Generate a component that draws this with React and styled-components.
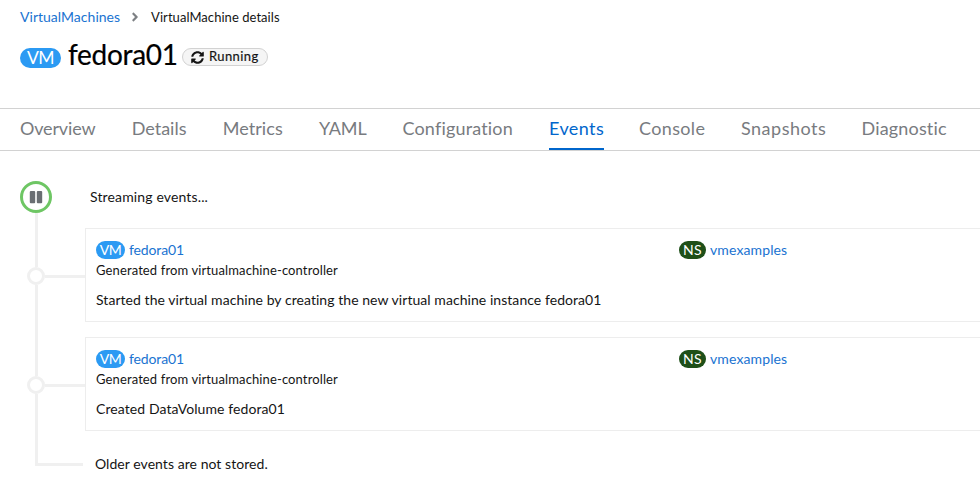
import React from "react";
import styled, { createGlobalStyle } from "styled-components";
import { FaSyncAlt, FaAngleRight } from "react-icons/fa";

const GlobalStyle = createGlobalStyle`
  *, *::before, *::after { box-sizing: border-box; }
  body {
    margin: 0;
    background: #fff;
    color: #151515;
    font-family: Lato, "Open Sans", sans-serif;
    font-size: 14px;
    line-height: 20px;
    overflow: hidden;
  }
`;

const Page = styled.main`
  height: 498px;
  overflow: hidden;
`;

const Text = styled.span`
  white-space: nowrap;
  letter-spacing: ${(p) => p.$track || 0}px;
`;

const Link = styled.a`
  color: #1a73d1;
  text-decoration: none;
  white-space: nowrap;
  letter-spacing: ${(p) => p.$track || 0}px;
`;

const Header = styled.header`
  height: 108px;
  padding: 7px 20px 0;
`;

const Breadcrumb = styled.nav`
  display: flex;
  align-items: center;
  height: 20px;
`;

const Divider = styled(FaAngleRight)`
  width: 10px;
  height: 14px;
  margin: 0 11px 0 10px;
  color: #7d8084;
`;

const Current = styled(Text)`
  font-size: 13px;
`;

const TitleRow = styled.div`
  display: flex;
  align-items: center;
  height: 40px;
  margin-top: 10px;
`;

const Title = styled.h1`
  margin: -6px 6px 0 7px;
  width: 108px;
  font-size: 28px;
  font-weight: 400;
  line-height: 36px;
  letter-spacing: -0.3px;
  color: #000;
  -webkit-text-stroke: 0.2px #000;
  white-space: nowrap;
`;

const Badge = styled.span`
  display: inline-flex;
  align-items: center;
  justify-content: center;
  flex: none;
  width: ${(p) => p.$width}px;
  height: ${(p) => (p.$large ? 20 : 18)}px;
  margin-top: ${(p) => (p.$large ? 2 : 0)}px;
  border-radius: 20px;
  background: ${(p) => p.$color};
  color: #fff;
  font-size: ${(p) => (p.$large ? 17.5 : 14)}px;
  font-weight: 400;
  letter-spacing: ${(p) => p.$track || 0}px;
  line-height: 18px;
`;

const Status = styled.span`
  display: flex;
  align-items: center;
  gap: 5px;
  width: 86px;
  height: 18px;
  padding-left: 8px;
  border: 1px solid #d2d2d2;
  border-radius: 9px;
  background: #f5f5f5;
  font-size: 13px;
  line-height: 16px;
  letter-spacing: 0.4px;
  -webkit-text-stroke: 0.2px #151515;
`;

const StatusText = styled.span`
  padding-bottom: 2px;
`;

const Tabs = styled.nav`
  display: flex;
  gap: 35px;
  height: 43px;
  padding-left: 20px;
  border-top: 1px solid #d2d2d2;
  border-bottom: 1px solid #d2d2d2;
`;

const Tab = styled.a`
  flex: none;
  width: ${(p) => p.$width}px;
  height: 41px;
  border-bottom: 2px solid ${(p) => (p.$active ? "#06c" : "transparent")};
  color: ${(p) => (p.$active ? "#06c" : "#787b80")};
  font-size: 18px;
  line-height: 38px;
  letter-spacing: ${(p) => p.$track}px;
  white-space: nowrap;
`;

const Stream = styled.section`
  padding: 30px 0 0 20px;
`;

const StreamRow = styled.div`
  display: flex;
  height: ${(p) => p.$height}px;
`;

const Rail = styled.div`
  display: flex;
  flex: none;
  flex-direction: column;
  width: 65px;
  padding-left: ${(p) => p.$inset || 0}px;
`;

const Line = styled.div`
  flex: ${(p) => (p.$height ? "none" : 1)};
  width: 3px;
  height: ${(p) => p.$height || 0}px;
  margin-left: ${(p) => p.$indent}px;
  background: #f0f0f0;
`;

const PauseButton = styled.button`
  display: flex;
  flex: none;
  align-items: center;
  justify-content: center;
  width: 32px;
  height: 32px;
  padding: 0;
  border: 3px solid #6ec664;
  border-radius: 50%;
  background: #fff;
  color: #6a6e73;
`;

const StreamLabel = styled.div`
  padding: 6px 0 0 5px;
`;

const NodeRow = styled.div`
  display: flex;
  align-items: center;
  height: 18px;
`;

const Node = styled.span`
  width: 18px;
  height: 18px;
  border: 3px solid #f0f0f0;
  border-radius: 50%;
`;

const Connector = styled.span`
  flex: 1;
  height: 3px;
  margin-top: 1px;
  background: #f0f0f0;
`;

const Card = styled.article`
  flex: 1;
  height: 94px;
  padding: 11px 10px 0;
  border: 1px solid #ededed;
  border-right: 0;
`;

const CardHead = styled.div`
  display: grid;
  grid-template-columns: 583px 1fr;
  height: 20px;
`;

const Resource = styled.div`
  display: flex;
  align-items: center;
  gap: 4px;
`;

const Source = styled.div`
  height: 20px;
  font-size: 13px;
  letter-spacing: 0.12px;
`;

const Message = styled.p`
  margin: 10px 0 0;
  letter-spacing: ${(p) => p.$track}px;
`;

const Footer = styled.div`
  display: flex;
`;

const Corner = styled.div`
  width: 48px;
  height: 35px;
  margin-left: 15px;
  border-left: 3px solid #f0f0f0;
  border-bottom: 3px solid #f0f0f0;
`;

const FooterText = styled(Text)`
  padding: 23px 0 0 12px;
`;

const tabs = [
  ["Overview", 76.7, -0.15],
  ["Details", 56, 0],
  ["Metrics", 61.3, 0.07],
  ["YAML", 48.5, -0.15],
  ["Configuration", 111.5, 0.17],
  ["Events", 55, 0.42],
  ["Console", 67, 0.35],
  ["Snapshots", 85.5, 0.5],
  ["Diagnostic", 85, 0.17],
];

const events = [
  ["Started the virtual machine by creating the new virtual machine instance fedora01", 0.055],
  ["Created DataVolume fedora01", 0.09],
];

function Event({ message, track, height }) {
  return (
    <StreamRow $height={height}>
      <Rail $inset={7}>
        <Line $height={39} $indent={8} />
        <NodeRow>
          <Node />
          <Connector />
        </NodeRow>
        <Line $indent={8} />
      </Rail>
      <Card>
        <CardHead>
          <Resource>
            <Badge $width={29} $color="#2b9af3" $track={-0.5}>VM</Badge>
            <Link $track={-0.13}>fedora01</Link>
          </Resource>
          <Resource>
            <Badge $width={27} $color="#1e4f18" $track={0.3}>NS</Badge>
            <Link $track={0.12}>vmexamples</Link>
          </Resource>
        </CardHead>
        <Source>Generated from virtualmachine-controller</Source>
        <Message $track={track}>{message}</Message>
      </Card>
    </StreamRow>
  );
}

export default function App() {
  return (
    <Page>
      <GlobalStyle />
      <Header>
        <Breadcrumb>
          <Link $track={0.02}>VirtualMachines</Link>
          <Divider />
          <Current $track={0.05}>VirtualMachine details</Current>
        </Breadcrumb>
        <TitleRow>
          <Badge $large $width={41} $color="#2b9af3" $track={-0.5}>VM</Badge>
          <Title>fedora01</Title>
          <Status>
            <FaSyncAlt size={13} />
            <StatusText>Running</StatusText>
          </Status>
        </TitleRow>
      </Header>
      <Tabs>
        {tabs.map(([name, width, track]) => (
          <Tab key={name} $width={width} $track={track} $active={name === "Events"}>
            {name}
          </Tab>
        ))}
      </Tabs>
      <Stream>
        <StreamRow $height={47}>
          <Rail>
            <PauseButton aria-label="Pause">
              <svg width="14" height="14" viewBox="0 0 14 14" fill="currentColor">
                <rect x="0.8" y="1" width="5.4" height="12.3" rx="1" />
                <rect x="7.8" y="1" width="5.4" height="12.3" rx="1" />
              </svg>
            </PauseButton>
            <Line $indent={15} />
          </Rail>
          <StreamLabel>
            <Text $track={0.14}>Streaming events...</Text>
          </StreamLabel>
        </StreamRow>
        {events.map(([message, track], i) => (
          <Event key={message} message={message} track={track} height={i === 0 ? 109 : 94} />
        ))}
        <Footer>
          <Corner />
          <FooterText $track={0.05}>Older events are not stored.</FooterText>
        </Footer>
      </Stream>
    </Page>
  );
}
